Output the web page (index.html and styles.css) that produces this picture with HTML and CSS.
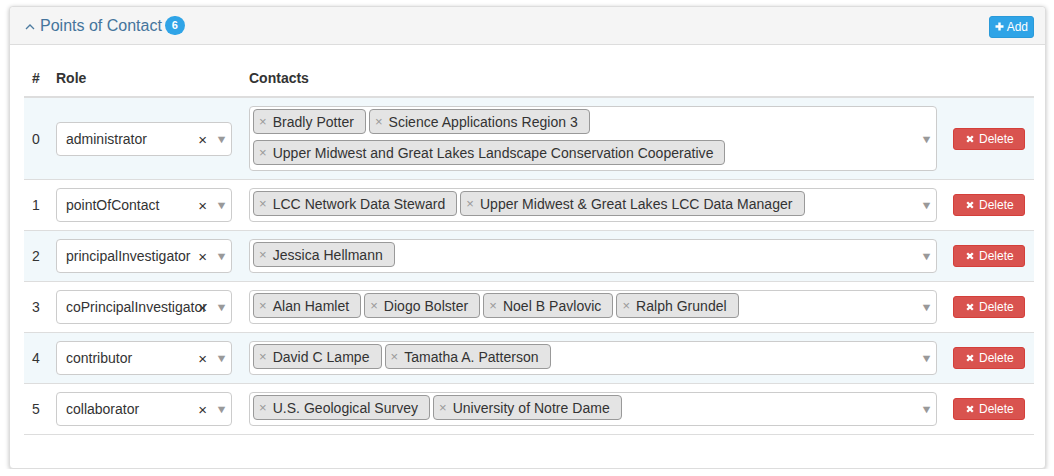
FILE: index.html
```html
<!DOCTYPE html>
<html>
<head>
<meta charset="utf-8">
<link rel="stylesheet" href="styles.css">
</head>
<body>
<div class="panel">
  <div class="panel-heading">
    <div class="title">
      <svg class="chev" width="10" height="7" viewBox="0 0 10 7"><polyline points="1,6 5,2 9,6" fill="none" stroke="#4d7ba0" stroke-width="1.3"/></svg>
      <span class="title-text">Points of Contact</span>
      <span class="badge">6</span>
    </div>
    <button class="btn btn-add"><svg width="9" height="9" viewBox="0 0 9 9"><path d="M4.5 0.5v8M0.5 4.5h8" stroke="#fff" stroke-width="2.4"/></svg>Add</button>
  </div>
  <div class="panel-body">
    <table class="grid">
      <colgroup><col class="c-idx"><col class="c-role"><col class="c-contacts"><col class="c-act"></colgroup>
      <thead>
        <tr><th>#</th><th>Role</th><th>Contacts</th><th></th></tr>
      </thead>
      <tbody>
        <tr class="striped">
          <td>0</td>
          <td><div class="role-sel"><span class="role-text">administrator</span><span class="clear">×</span><span class="caret">▼</span></div></td>
          <td><div class="multi"><div class="tags"><span class="tag"><span class="tx">×</span>Bradly Potter</span><span class="tag"><span class="tx">×</span>Science Applications Region 3</span><span class="tag"><span class="tx">×</span>Upper Midwest and Great Lakes Landscape Conservation Cooperative</span></div><span class="caret">▼</span></div></td>
          <td><button class="btn btn-del"><svg width="8" height="8" viewBox="0 0 8 8"><path d="M1.2 1.2l5.6 5.6M6.8 1.2l-5.6 5.6" stroke="#fff" stroke-width="2.3"/></svg>Delete</button></td>
        </tr>
        <tr>
          <td>1</td>
          <td><div class="role-sel"><span class="role-text">pointOfContact</span><span class="clear">×</span><span class="caret">▼</span></div></td>
          <td><div class="multi"><div class="tags"><span class="tag"><span class="tx">×</span>LCC Network Data Steward</span><span class="tag"><span class="tx">×</span>Upper Midwest &amp; Great Lakes LCC Data Manager</span></div><span class="caret">▼</span></div></td>
          <td><button class="btn btn-del"><svg width="8" height="8" viewBox="0 0 8 8"><path d="M1.2 1.2l5.6 5.6M6.8 1.2l-5.6 5.6" stroke="#fff" stroke-width="2.3"/></svg>Delete</button></td>
        </tr>
        <tr class="striped">
          <td>2</td>
          <td><div class="role-sel"><span class="role-text">principalInvestigator</span><span class="clear">×</span><span class="caret">▼</span></div></td>
          <td><div class="multi"><div class="tags"><span class="tag"><span class="tx">×</span>Jessica Hellmann</span></div><span class="caret">▼</span></div></td>
          <td><button class="btn btn-del"><svg width="8" height="8" viewBox="0 0 8 8"><path d="M1.2 1.2l5.6 5.6M6.8 1.2l-5.6 5.6" stroke="#fff" stroke-width="2.3"/></svg>Delete</button></td>
        </tr>
        <tr>
          <td>3</td>
          <td><div class="role-sel"><span class="role-text">coPrincipalInvestigator</span><span class="clear">×</span><span class="caret">▼</span></div></td>
          <td><div class="multi"><div class="tags"><span class="tag"><span class="tx">×</span>Alan Hamlet</span><span class="tag"><span class="tx">×</span>Diogo Bolster</span><span class="tag"><span class="tx">×</span>Noel B Pavlovic</span><span class="tag"><span class="tx">×</span>Ralph Grundel</span></div><span class="caret">▼</span></div></td>
          <td><button class="btn btn-del"><svg width="8" height="8" viewBox="0 0 8 8"><path d="M1.2 1.2l5.6 5.6M6.8 1.2l-5.6 5.6" stroke="#fff" stroke-width="2.3"/></svg>Delete</button></td>
        </tr>
        <tr class="striped">
          <td>4</td>
          <td><div class="role-sel"><span class="role-text">contributor</span><span class="clear">×</span><span class="caret">▼</span></div></td>
          <td><div class="multi"><div class="tags"><span class="tag"><span class="tx">×</span>David C Lampe</span><span class="tag"><span class="tx">×</span>Tamatha A. Patterson</span></div><span class="caret">▼</span></div></td>
          <td><button class="btn btn-del"><svg width="8" height="8" viewBox="0 0 8 8"><path d="M1.2 1.2l5.6 5.6M6.8 1.2l-5.6 5.6" stroke="#fff" stroke-width="2.3"/></svg>Delete</button></td>
        </tr>
        <tr>
          <td>5</td>
          <td><div class="role-sel"><span class="role-text">collaborator</span><span class="clear">×</span><span class="caret">▼</span></div></td>
          <td><div class="multi"><div class="tags"><span class="tag"><span class="tx">×</span>U.S. Geological Survey</span><span class="tag"><span class="tx">×</span>University of Notre Dame</span></div><span class="caret">▼</span></div></td>
          <td><button class="btn btn-del"><svg width="8" height="8" viewBox="0 0 8 8"><path d="M1.2 1.2l5.6 5.6M6.8 1.2l-5.6 5.6" stroke="#fff" stroke-width="2.3"/></svg>Delete</button></td>
        </tr>
      </tbody>
    </table>
  </div>
</div>
</body>
</html>
```
FILE: styles.css
```css
* { box-sizing: border-box; }
body {
  margin: 0;
  background: #fff;
  font-family: "Liberation Sans", Arial, sans-serif;
  font-size: 14px;
  line-height: 20px;
  color: #333;
}
.panel {
  margin: 6px 8px 0 9px;
  height: 463px;
  border: 1px solid #ddd;
  border-radius: 4px;
  box-shadow: 0 1px 4px rgba(0,0,0,0.25);
  background: #fff;
}
.panel-heading {
  height: 38px;
  background: #f5f5f5;
  border-bottom: 1px solid #ddd;
  border-radius: 4px 4px 0 0;
  display: flex;
  align-items: center;
  justify-content: space-between;
  padding: 0 11px 0 15px;
}
.title {
  display: flex;
  align-items: center;
  color: #44749c;
  font-size: 16px;
}
.chev { margin-right: 5px; margin-top: 1px; }
.title-text { line-height: 20px; }
.badge {
  margin-left: 3px;
  width: 20px;
  height: 19px;
  border-radius: 10px;
  background: #2fa4e7;
  color: #fff;
  font-size: 11px;
  font-weight: bold;
  display: flex;
  align-items: center;
  justify-content: center;
  line-height: 1;
}
.btn {
  font-family: "Liberation Sans", Arial, sans-serif;
  font-size: 12px;
  line-height: 18px;
  color: #fff;
  border-radius: 3px;
  padding: 1px 5px;
  display: inline-flex;
  align-items: center;
  gap: 3px;
  cursor: pointer;
}
.btn-add {
  background: #2fa4e7;
  border: 1px solid #2a9ad9;
  margin-top: 2px;
  padding: 1px 5px 1px 5px;
}
.btn-del {
  background: #d9534f;
  border: 1px solid #d43f3a;
  padding: 1px 10px 1px 12px;
  gap: 5px;
}
.panel-body {
  padding: 15px 11px 0 14px;
}
.grid {
  width: 1010px;
  border-collapse: collapse;
  table-layout: fixed;
}
.c-idx { width: 24px; }
.c-role { width: 193px; }
.c-contacts { width: 704px; }
.c-act { width: 89px; }
.grid th {
  text-align: left;
  font-weight: bold;
  padding: 8px;
  border-bottom: 2px solid #ddd;
  line-height: 20px;
  color: #333;
}
.grid td {
  padding: 8px;
  border-top: 1px solid #ddd;
  vertical-align: middle;
}
.grid tbody tr:first-child td { border-top: 0; }
.grid tr.striped td { background: #f1f8fb; }
.grid tbody tr:last-child td { border-bottom: 1px solid #ddd; }
.role-sel {
  position: relative;
  height: 34px;
  width: 176px;
  border: 1px solid #ccc;
  border-radius: 4px;
  background: #fff;
  padding: 6px 9px;
  display: flex;
  align-items: center;
}
.role-text { white-space: nowrap; }
.role-sel .clear {
  position: absolute;
  right: 24px;
  top: 7px;
  font-size: 15px;
  color: #333;
}
.caret {
  position: absolute;
  font-size: 11px;
  color: #999;
  top: 50%;
  transform: translateY(-50%) scaleX(1.15);
  line-height: 1;
}
.role-sel .caret { right: 4px; }
.multi {
  position: relative;
  width: 688px;
  min-height: 34px;
  border: 1px solid #ccc;
  border-radius: 4px;
  background: #fff;
  padding: 2px 40px 0 3px;
}
.multi .caret { right: 4px; }
.tags {
  display: flex;
  flex-wrap: wrap;
  gap: 1px 3px;
}
.tag {
  display: inline-flex;
  align-items: center;
  height: 25px;
  margin: 0 0 5px 0;
  padding: 0 11px 0 5px;
  border: 1px solid #999;
  border-radius: 4px;
  background: #e4e4e4;
  color: #333;
  white-space: nowrap;
  letter-spacing: 0.03px;
}
.tag .tx {
  color: #999;
  font-size: 13px;
  margin-right: 6px;
}
```
